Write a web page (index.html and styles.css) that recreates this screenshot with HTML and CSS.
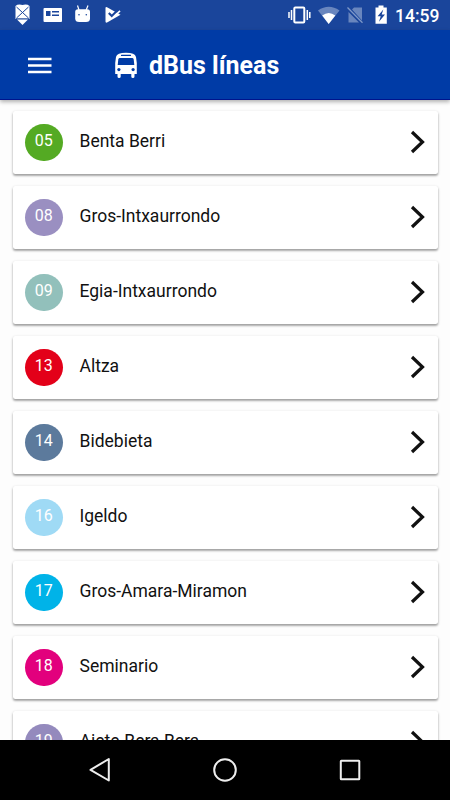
FILE: index.html
```html
<!DOCTYPE html>
<html lang="es">
<head>
    <meta charset="UTF-8">
    <meta name="viewport" content="width=device-width, initial-scale=1.0">
    <title>dBus líneas</title>
    <link rel="stylesheet" href="styles.css">
</head>
<body>

<div class="screen">
    <!-- Status bar -->
    <div class="status-bar">
        <svg class="notifications" width="124" height="30" viewBox="0 0 124 30">
            <path d="M15.5 6Q18 3.800 22.500 5Q27 3.800 29.500 6V19H15.500Z" fill="#fff"/>
            <path d="M16.500 7L28.500 18M28.500 7L16.500 18M16 18.800H29" stroke="#1a459b" stroke-width="1" fill="none"/>
            <path d="M17 19.600H28L22.500 25Z" fill="#fff"/>
            <rect x="43.500" y="8" width="18.500" height="14" rx="1" fill="#fff"/>
            <path d="M46 11H50.500V16H46ZM52 11H59V12.500H52ZM52 14.500H59V16H52Z" fill="#1a459b"/>
            <path d="M75.200 12Q75.200 9.200 78 9.200H87.200Q90 9.200 90 12V18.500Q90 22 86 22H79.200Q75.200 22 75.200 18.500Z" fill="#fff"/>
            <path d="M79 10L77.500 5.500M86.200 10L88 5.500" stroke="#fff" stroke-width="1.200"/>
            <circle cx="79" cy="14.800" r=".8" fill="#1a459b"/>
            <circle cx="86.300" cy="14.800" r=".8" fill="#1a459b"/>
            <path d="M105.500 8Q105.500 6.500 107 7.200L120.500 14.800L107.500 22.300Q105.500 23.300 105.500 21.500Z" fill="#fff"/>
            <path d="M108.800 13L111.800 16L118.300 9.500" fill="none" stroke="#1a459b" stroke-width="2.200"/>
            <path d="M113 17.500L120 10.800" fill="none" stroke="#fff" stroke-width="1.600"/>
        </svg>
        <div class="status-right">
            <svg width="102" height="30" viewBox="286 0 102 30">
                <rect x="294.300" y="7.500" width="10" height="15" rx="1" fill="none" stroke="#fff" stroke-width="2"/>
                <path d="M291.500 10V20M289 12V18M307.300 10V20M309.800 12V18" stroke="#fff" stroke-width="1.500"/>
                <path d="M318 10.500Q328.700 3 339.500 10.500L328.700 24Z" fill="#fff" opacity=".35"/>
                <path d="M322.200 15.500Q328.700 10.500 335.300 15.500L328.700 24Z" fill="#fff"/>
                <path d="M352 9.500L354 7.500H362V20.500ZM348.500 12L359 22.500H348.500Z" fill="#fff" opacity=".35"/>
                <path d="M347.500 7.500L362.500 22.800" stroke="#7e98c8" stroke-width="1.300"/>
                <path d="M375.500 7.500H378.500V5.500H383.500V7.500H386.800V23.800H375.500Z" fill="#fff"/>
                <path d="M383.300 9.500L377.600 16.200H380.700L379 21.700L385 14.500H381.700Z" fill="#1a459b"/>
            </svg>
            <span class="clock">14:59</span>
        </div>
    </div>

    <!-- Toolbar -->
    <header class="toolbar">
        <svg class="menu-icon" width="24" height="18" viewBox="0 0 24 18">
            <path d="M0 2H23.500M0 8.500H23.500M0 15H23.500" stroke="#fff" stroke-width="2.500"/>
        </svg>
        <svg class="bus-icon" width="24" height="27" viewBox="0 0 24 27">
            <path d="M2 5Q3 .8 12 .8Q21 .8 22 5L22.800 11V22H20.500V24.500Q20.500 26 18.900 26Q17.300 26 17.300 24.500V22H6.700V24.500Q6.700 26 5.100 26Q3.500 26 3.500 24.500V22H1.200V11Z" fill="#fff"/>
            <path d="M7.500 3.400H16.500" stroke="#003ba6" stroke-width="1.100" stroke-linecap="round"/>
            <path d="M5.500 6H18.500Q19.500 6 19.700 7.500L20.300 13H3.700L4.300 7.500Q4.500 6 5.500 6Z" fill="#003ba6"/>
            <circle cx="4.900" cy="17.600" r="1.600" fill="#003ba6"/>
            <circle cx="19.100" cy="17.600" r="1.600" fill="#003ba6"/>
        </svg>
        <h1 class="title">dBus líneas</h1>
    </header>

    <!-- Bus lines -->
    <main class="lines">
        <div class="line">
            <span class="number green">05</span>
            <span class="name">Benta Berri</span>
            <svg class="arrow" viewBox="0 0 16 24"><path d="M2 2L12.500 12L2 22"/></svg>
        </div>
        <div class="line">
            <span class="number purple">08</span>
            <span class="name">Gros-Intxaurrondo</span>
            <svg class="arrow" viewBox="0 0 16 24"><path d="M2 2L12.500 12L2 22"/></svg>
        </div>
        <div class="line">
            <span class="number teal">09</span>
            <span class="name">Egia-Intxaurrondo</span>
            <svg class="arrow" viewBox="0 0 16 24"><path d="M2 2L12.500 12L2 22"/></svg>
        </div>
        <div class="line">
            <span class="number red">13</span>
            <span class="name">Altza</span>
            <svg class="arrow" viewBox="0 0 16 24"><path d="M2 2L12.500 12L2 22"/></svg>
        </div>
        <div class="line">
            <span class="number slate">14</span>
            <span class="name">Bidebieta</span>
            <svg class="arrow" viewBox="0 0 16 24"><path d="M2 2L12.500 12L2 22"/></svg>
        </div>
        <div class="line">
            <span class="number sky">16</span>
            <span class="name">Igeldo</span>
            <svg class="arrow" viewBox="0 0 16 24"><path d="M2 2L12.500 12L2 22"/></svg>
        </div>
        <div class="line">
            <span class="number cyan">17</span>
            <span class="name">Gros-Amara-Miramon</span>
            <svg class="arrow" viewBox="0 0 16 24"><path d="M2 2L12.500 12L2 22"/></svg>
        </div>
        <div class="line">
            <span class="number pink">18</span>
            <span class="name">Seminario</span>
            <svg class="arrow" viewBox="0 0 16 24"><path d="M2 2L12.500 12L2 22"/></svg>
        </div>
        <div class="line">
            <span class="number violet">19</span>
            <span class="name">Aiete-Bera Bera</span>
            <svg class="arrow" viewBox="0 0 16 24"><path d="M2 2L12.500 12L2 22"/></svg>
        </div>
    </main>

    <!-- Navigation bar -->
    <nav class="nav-bar">
        <svg width="26" height="26" viewBox="0 0 26 26"><path d="M21.800 2V23.500L3.500 12.800Z"/></svg>
        <svg width="26" height="26" viewBox="0 0 26 26"><circle cx="13" cy="13" r="10.800"/></svg>
        <svg width="26" height="26" viewBox="0 0 26 26"><rect x="3.800" y="3.800" width="18.500" height="18.500" rx=".5"/></svg>
    </nav>
</div>

</body>
</html>
```
FILE: styles.css
```css
* {
    margin: 0;
    padding: 0;
    box-sizing: border-box;
    font-family: Roboto, sans-serif;
}

body {
    background: #fdfdfd;
    overflow: hidden;
}

.screen {
    width: 450px;
    height: 800px;
    display: flex;
    flex-direction: column;
}

.status-bar {
    height: 30px;
    flex: none;
    display: flex;
    justify-content: space-between;
    background: #1a459b;
    color: #fff;
}

.status-right {
    display: flex;
    align-items: center;
    gap: 7px;
    padding-right: 11px;
}

.clock {
    font-size: 17.5px;
    font-weight: 500;
    line-height: 30px;
    padding-top: 2px;
    width: 44px;
    white-space: nowrap;
}

.toolbar {
    height: 70px;
    flex: none;
    display: flex;
    align-items: center;
    padding-left: 28px;
    background: #003ba6;
    border-bottom: 1px solid #00148c;
    box-shadow: 0 2px 4px rgba(0, 0, 0, 0.3);
    color: #fff;
    z-index: 1;
}

.menu-icon {
    margin-top: 2px;
}

.bus-icon {
    margin: 1px 0 0 62px;
}

.title {
    margin: 2px 0 0 11px;
    font-size: 25px;
    font-weight: 700;
    line-height: 30px;
    white-space: nowrap;
}

.lines {
    flex: 1;
    min-height: 0;
    overflow: hidden;
    display: flex;
    flex-direction: column;
    gap: 12px;
    padding: 11px 12.5px 0;
}

.line {
    height: 63px;
    flex: none;
    display: flex;
    align-items: center;
    padding: 0 12px 0 12.5px;
    background: #fff;
    border-radius: 2.5px;
    box-shadow: 0 2px 2px rgba(0, 0, 0, 0.24), 0 1px 3px rgba(0, 0, 0, 0.22);
}

.number {
    width: 37.5px;
    height: 37.5px;
    flex: none;
    border-radius: 50%;
    color: #fff;
    font-size: 16px;
    line-height: 34px;
    text-align: center;
}

.name {
    flex: 1;
    margin: -4px 0 0 17px;
    color: #111;
    font-size: 17.5px;
    line-height: 22px;
}

.arrow {
    width: 16px;
    height: 24px;
    margin-top: -1px;
    fill: none;
    stroke: #111;
    stroke-width: 3.2;
}

/* Line colours */
.green { background: #54aa23; }
.purple { background: #9a8fc1; }
.teal { background: #92c0bb; }
.red { background: #e30019; }
.slate { background: #5c7a9c; }
.sky { background: #9fdaf5; }
.cyan { background: #00b3e8; }
.pink { background: #e2007d; }
.violet { background: #948abd; }

.nav-bar {
    height: 60px;
    flex: none;
    display: flex;
    justify-content: center;
    align-items: center;
    gap: 99px;
    background: #000;
}

.nav-bar svg {
    fill: none;
    stroke: #eee;
    stroke-width: 2;
    stroke-linejoin: round;
}
```
